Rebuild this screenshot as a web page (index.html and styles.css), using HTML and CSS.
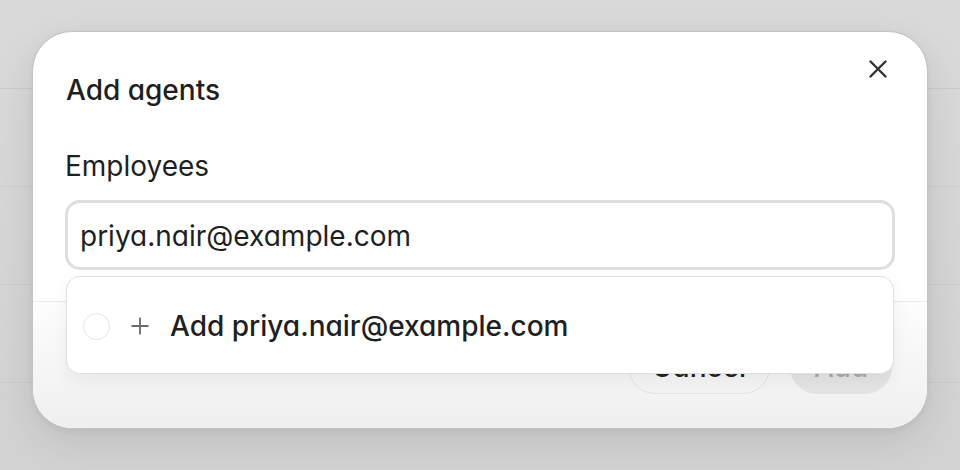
FILE: index.html
```html
<!DOCTYPE html>
<html lang="en">
<head>
<meta charset="utf-8">
<title>Add agents</title>
<link rel="stylesheet" href="styles.css">
</head>
<body>
<div class="backdrop">
  <div class="modal" role="dialog" aria-labelledby="dlg-title">
    <button class="close" aria-label="Close">
      <svg width="18" height="18" viewBox="0 0 18 18"><path d="M1.5 1.5 L16.5 16.5 M16.5 1.5 L1.5 16.5" stroke="#333" stroke-width="2.4" stroke-linecap="round" fill="none"/></svg>
    </button>
    <div class="modal-body">
      <h2 class="title" id="dlg-title">Add agents</h2>
      <label class="label">Employees</label>
      <div class="combo">
        <div class="input">priya.nair@example.com</div>
        <div class="menu">
          <div class="option">
            <span class="radio"></span>
            <svg class="plus" width="18" height="18" viewBox="0 0 18 18"><path d="M9 0.5 V17.5 M0.5 9 H17.5" stroke="#6b6b6b" stroke-width="1.8" fill="none"/></svg>
            <span class="option-text">Add priya.nair@example.com</span>
          </div>
        </div>
      </div>
    </div>
    <div class="modal-footer">
      <button class="btn btn-cancel">Cancel</button>
      <button class="btn btn-add" disabled>Add</button>
    </div>
  </div>
</div>
</body>
</html>
```
FILE: styles.css
```css
html, body {
  margin: 0;
  padding: 0;
}
body {
  width: 960px;
  height: 470px;
  overflow: hidden;
  font-family: Inter, "Noto Sans", "Liberation Sans", sans-serif;
  font-feature-settings: "cv11" 1;
  color: #1f1f1f;
}
.backdrop {
  height: 470px;
  box-sizing: border-box;
  padding: 31px 32px 0;
  background:
    repeating-linear-gradient(to bottom, transparent 0, transparent 88px, #cdcdcd 88px, #cdcdcd 89px, transparent 89px, transparent 98px),
    linear-gradient(to bottom, #dadada, #d2d2d2);
  background-position: 0 0, 0 0;
  background-size: 100% 98px, 100% 100%;
  background-repeat: repeat-y, no-repeat;
}
.modal {
  position: relative;
  width: 896px;
  box-sizing: border-box;
  border: 1px solid #c3c3c3;
  border-radius: 40px;
  background: #fff;
  box-shadow: 0 12px 40px rgba(0, 0, 0, 0.10), 0 2px 6px rgba(0, 0, 0, 0.05);
}
.close {
  position: absolute;
  top: 28px;
  right: 40px;
  width: 18px;
  height: 18px;
  padding: 0;
  border: 0;
  background: none;
  display: flex;
}
.modal-body {
  padding: 42px 32px 31px 32px;
  display: flex;
  flex-direction: column;
}
.title {
  margin: 0 0 0 1px;
  font-size: 28px;
  line-height: 32px;
  font-weight: 500;
}
.label {
  margin-top: 44px;
  font-size: 28px;
  line-height: 32px;
  font-weight: 400;
}
.combo {
  position: relative;
  margin-top: 18px;
}
.input {
  height: 70px;
  box-sizing: border-box;
  border: 3px solid #dedede;
  border-radius: 15px;
  padding: 2px 12px 0;
  display: flex;
  align-items: center;
  font-size: 28px;
  line-height: 32px;
  background: #fff;
}
.menu {
  position: absolute;
  left: 1px;
  right: 1px;
  top: 76px;
  height: 98px;
  box-sizing: border-box;
  border: 1px solid #e0e0e0;
  border-radius: 14px;
  background: #fff;
  box-shadow: 0 6px 18px rgba(0, 0, 0, 0.06);
  display: flex;
  align-items: center;
  padding: 0 16px;
  z-index: 2;
}
.option {
  display: flex;
  align-items: center;
  margin-top: 2px;
}
.radio {
  width: 27px;
  height: 27px;
  box-sizing: border-box;
  border: 1.5px solid #e4e4e4;
  border-radius: 50%;
}
.plus {
  margin-left: 21px;
}
.option-text {
  margin-left: 21px;
  font-size: 28px;
  line-height: 32px;
  font-weight: 500;
}
.modal-footer {
  border-top: 1px solid #ebebeb;
  border-radius: 0 0 39px 39px;
  background: linear-gradient(to bottom, #fdfdfd, #efefef);
  padding: 38px 35px 34px;
  display: flex;
  justify-content: flex-end;
  gap: 20px;
}
.btn {
  height: 54px;
  border-radius: 27px;
  font-family: inherit;
  font-feature-settings: "cv11" 1;
  font-size: 28px;
  font-weight: 500;
  padding: 0;
}
.btn-cancel {
  width: 142px;
  border: 1px solid #e3e3e3;
  background: transparent;
  color: #222;
}
.btn-add {
  width: 102px;
  border: 0;
  background: #e4e4e4;
  color: #a9a9a9;
}
```
